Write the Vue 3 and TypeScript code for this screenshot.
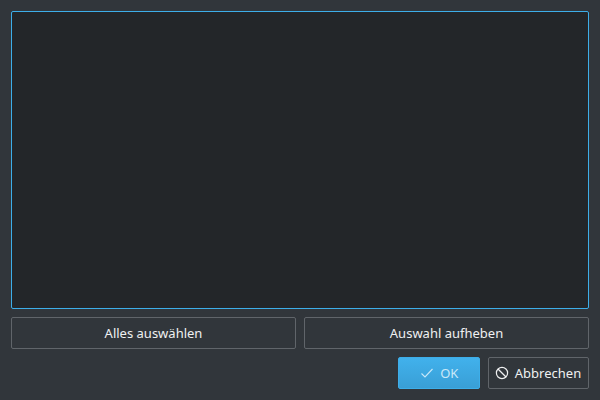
<script setup lang="ts">
const selectionActions: string[] = ['Alles auswählen', 'Auswahl aufheben']
</script>

<template>
  <div class="dialog">
    <div class="list"></div>
    <div class="row">
      <button v-for="label in selectionActions" :key="label" class="btn wide">{{ label }}</button>
    </div>
    <div class="footer">
      <button class="btn ok">
        <svg width="16" height="16" viewBox="0 0 16 16" fill="none" stroke="currentColor" stroke-width="1.1">
          <path d="M2.5 8.5 L6 12 L13.5 4" />
        </svg>
        <span>OK</span>
      </button>
      <button class="btn cancel">
        <svg width="16" height="16" viewBox="0 0 16 16" fill="none" stroke="currentColor" stroke-width="1.2">
          <circle cx="8" cy="8" r="5.6" />
          <path d="M4 4 L12 12" />
        </svg>
        <span>Abbrechen</span>
      </button>
    </div>
  </div>
</template>

<style>
html, body { margin: 0; background: #31363b; }
</style>

<style scoped>
.dialog {
  width: 600px;
  height: 400px;
  box-sizing: border-box;
  padding: 11px;
  display: flex;
  flex-direction: column;
  gap: 8px;
  background: #31363b;
  font-family: "Noto Sans", sans-serif;
  font-size: 13px;
  color: #eff0f1;
}
.list {
  flex: 1;
  background: #232629;
  border: 1px solid #3daee9;
  border-radius: 2px;
}
.row { display: flex; gap: 8px; }
.footer { display: flex; justify-content: flex-end; gap: 8px; }
.btn {
  height: 32px;
  box-sizing: border-box;
  padding: 0;
  display: flex;
  align-items: center;
  justify-content: center;
  font: inherit;
  color: inherit;
  background: #31363b;
  border: 1px solid #60656a;
  border-radius: 2px;
}
.wide { flex: 1; }
.ok {
  width: 82px;
  gap: 5.5px;
  padding-right: 1px;
  color: #c9e8f9;
  background: linear-gradient(#41b1ec, #399fd6);
  border-color: #3daee9;
}
.cancel {
  width: 101px;
  gap: 5px;
  padding-right: 2px;
  color: #eff0f1;
}
</style>
